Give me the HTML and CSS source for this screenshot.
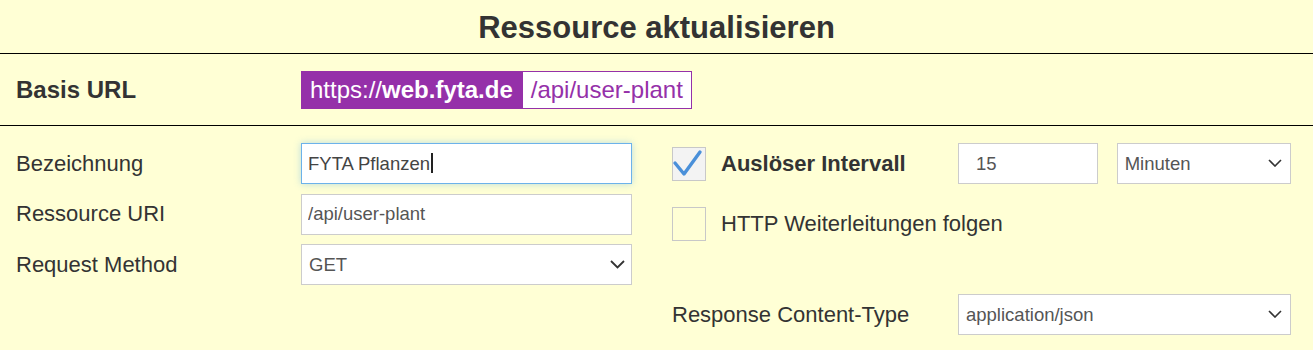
FILE: index.html
```html
<!DOCTYPE html>
<html lang="de">
<head>
  <meta charset="UTF-8" />
  <title>Ressource aktualisieren</title>
  <meta name="viewport" content="width=device-width, initial-scale=1" />
  <link rel="stylesheet" href="styles.css">
</head>
<body>
  <div class="panel">
    <h1 class="panel-title">Ressource aktualisieren</h1>

    <div class="base-row">
      <div class="base-label">Basis URL</div>
      <div class="base-url">
        <span class="host">https://<b>web.fyta.de</b></span><span class="path">/api/user-plant</span>
      </div>
    </div>

    <form class="form">
      <div class="col-left">
        <label class="field">
          <span class="field-label">Bezeichnung</span>
          <span class="input-wrap">
            <input class="control is-focused" type="text" value="FYTA Pflanzen">
            <span class="caret"></span>
          </span>
        </label>
        <label class="field">
          <span class="field-label">Ressource URI</span>
          <input class="control" type="text" value="/api/user-plant">
        </label>
        <label class="field">
          <span class="field-label">Request Method</span>
          <span class="select-wrap">
            <select class="control">
              <option>GET</option>
              <option>POST</option>
            </select>
            <svg class="chevron" width="15" height="9" viewBox="0 0 15 9"><path d="M1 1l6.5 6.5L14 1" fill="none" stroke="#333" stroke-width="1.8"/></svg>
          </span>
        </label>
      </div>

      <div class="col-right">
        <div class="opt-row">
          <span class="opt-main">
            <span class="check is-checked">
              <svg width="34" height="34" viewBox="0 0 34 34"><path d="M3 16l9 11L28 5" fill="none" stroke="#4a90d9" stroke-width="3.4" stroke-linecap="round" stroke-linejoin="round"/></svg>
            </span>
            <span class="opt-label is-bold">Auslöser Intervall</span>
          </span>
          <input class="control num" type="text" value="15">
          <span class="select-wrap unit">
            <select class="control">
              <option>Minuten</option>
              <option>Stunden</option>
            </select>
            <svg class="chevron" width="14" height="8" viewBox="0 0 14 8"><path d="M1 1l6 6 6-6" fill="none" stroke="#333" stroke-width="1.6"/></svg>
          </span>
        </div>

        <div class="opt-row redirect">
          <span class="opt-main">
            <span class="check"></span>
            <span class="opt-label">HTTP Weiterleitungen folgen</span>
          </span>
        </div>

        <div class="opt-row content-type">
          <span class="opt-label">Response Content-Type</span>
          <span class="select-wrap wide">
            <select class="control">
              <option>application/json</option>
              <option>text/plain</option>
            </select>
            <svg class="chevron" width="14" height="8" viewBox="0 0 14 8"><path d="M1 1l6 6 6-6" fill="none" stroke="#333" stroke-width="1.6"/></svg>
          </span>
        </div>
      </div>
    </form>
  </div>
</body>
</html>
```

FILE: styles.css
```css
body {
  margin: 0;
  background-color: #ffffd5;
  font-family: "Liberation Sans", Arial, sans-serif;
  color: #333;
}
.panel-title {
  margin: 0;
  padding: 10px 0 7px;
  font-size: 31px;
  line-height: 36px;
  text-align: center;
  color: #333;
  border-bottom: 1px solid #000;
}
.base-row {
  display: flex;
  align-items: center;
  height: 71px;
  padding-left: 16px;
  border-bottom: 1px solid #000;
}
.base-label {
  width: 285px;
  font-size: 24px;
  font-weight: bold;
}
.base-url {
  display: flex;
  font-size: 24px;
  line-height: 28px;
}
.host {
  background-color: #9530a9;
  color: #fff;
  padding: 5px 9px;
}
.path {
  background-color: #fff;
  color: #9530a9;
  border: 1px solid #9530a9;
  padding: 4px 8px;
}
.form {
  display: flex;
  padding: 17px 0 0 16px;
  margin: 0;
}
.col-left {
  display: flex;
  flex-direction: column;
  gap: 9.5px;
}
.field {
  display: flex;
  align-items: center;
}
.field-label {
  width: 285px;
  font-size: 22px;
}
.control {
  box-sizing: border-box;
  height: 41px;
  width: 331px;
  margin: 0;
  padding: 0 6px;
  border: 1px solid #ccc;
  border-radius: 0;
  background-color: #fff;
  font-family: "Liberation Sans", Arial, sans-serif;
  font-size: 18.5px;
  color: #555;
  outline: none;
}
.control.is-focused {
  border-color: #6cb2ea;
  box-shadow: 0 0 7px rgba(102, 175, 233, 0.45);
  color: #444;
}
.input-wrap {
  position: relative;
  display: block;
}
.caret {
  position: absolute;
  left: 130px;
  top: 10px;
  width: 1.5px;
  height: 20px;
  background-color: #222;
}
select.control {
  appearance: none;
  -webkit-appearance: none;
  padding: 0 7px;
}
.select-wrap {
  position: relative;
  display: block;
}
.chevron {
  position: absolute;
  right: 7px;
  top: 16px;
  pointer-events: none;
}
.col-right {
  margin-left: 40px;
}
.opt-row {
  display: flex;
  align-items: center;
  height: 41px;
}
.opt-main {
  display: flex;
  align-items: center;
  gap: 15px;
  width: 286px;
  white-space: nowrap;
}
.redirect .opt-main {
  width: auto;
}
.check {
  box-sizing: border-box;
  width: 34px;
  height: 34px;
  border: 1px solid #c8c8c8;
  display: flex;
  flex-shrink: 0;
}
.check.is-checked {
  background-color: #f3f3f3;
}
.check svg {
  margin: -1px;
}
.opt-label {
  font-size: 22px;
  color: #333;
}
.opt-label.is-bold {
  font-weight: bold;
}
.num {
  width: 140px;
  padding-left: 17px;
}
.unit {
  margin-left: 18.7px;
}
.unit .control {
  width: 174.3px;
}
.unit .chevron {
  right: 9px;
}
.redirect {
  margin-top: 19px;
}
.content-type {
  margin-top: 50px;
}
.content-type .opt-label {
  width: 286px;
}
.wide .control {
  width: 333px;
}
.wide .chevron {
  right: 9px;
}
```
